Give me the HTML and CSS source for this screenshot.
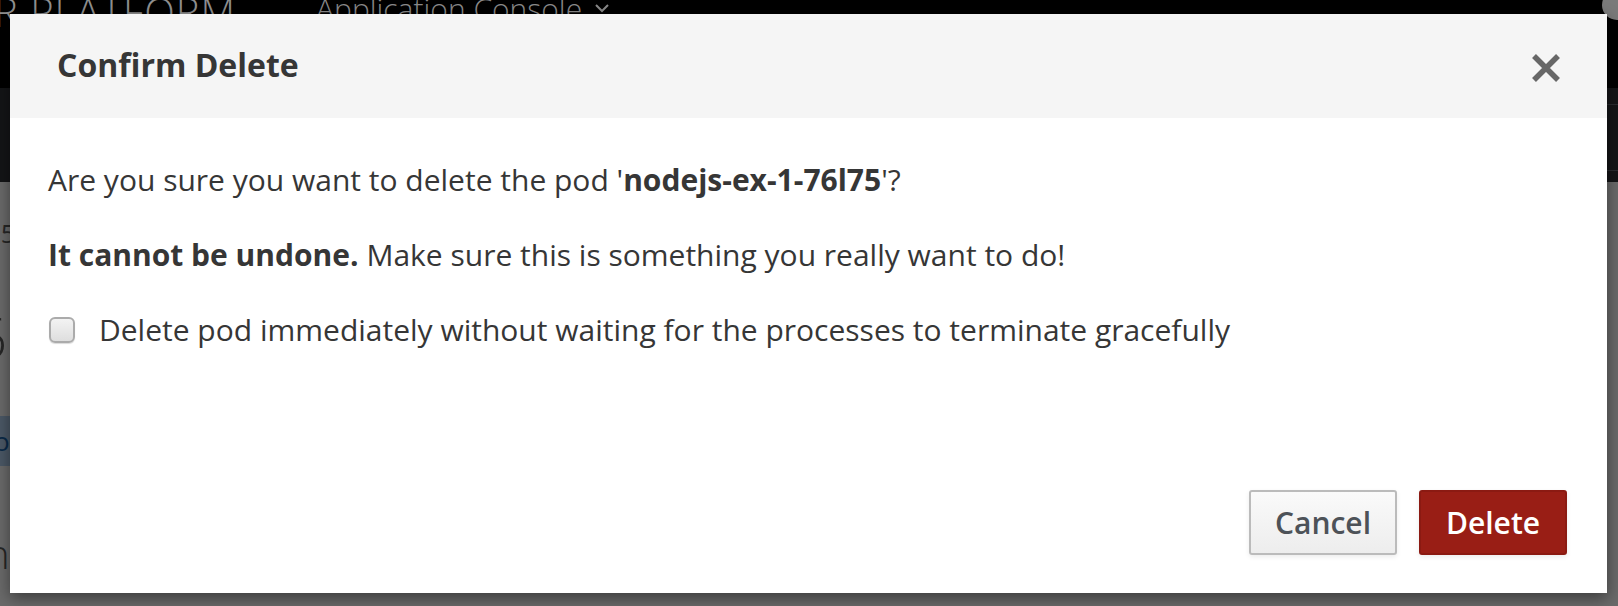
FILE: index.html
```html
<!DOCTYPE html>
<html>
<head>
<meta charset="utf-8">
<title>Confirm Delete</title>
<link rel="stylesheet" href="styles.css">
</head>
<body>
<div class="page">
  <div class="navbar">
    <span class="brand">R PLATFORM</span>
    <span class="console">Application Console</span>
    <svg class="caret" width="16" height="10" viewBox="0 0 16 10"><path d="M2 1 L8 7 L14 1" stroke="#8a8a8a" stroke-width="2" fill="none"/></svg>
    <span class="avatar"></span>
  </div>
  <div class="subnav">
    <span class="subnav-line top"></span>
    <span class="subnav-line bottom"></span>
  </div>
  <div class="content">
    <div class="peek five">15</div>
    <div class="peek six">6</div>
    <div class="peek band">po</div>
    <div class="peek en">n</div>
  </div>
</div>

<div class="modal">
  <div class="modal-header">
    <h2 class="modal-title">Confirm Delete</h2>
    <button class="close" aria-label="Close">
      <svg width="30" height="30" viewBox="0 0 30 30"><path d="M3 3 L27 27 M27 3 L3 27" stroke="#676767" stroke-width="5.5" fill="none"/></svg>
    </button>
  </div>
  <div class="modal-body">
    <p>Are you sure you want to delete the pod '<strong>nodejs-ex-1-76l75</strong>'?</p>
    <p><strong>It cannot be undone.</strong> Make sure this is something you really want to do!</p>
    <label class="check-row"><span class="checkbox"></span><span>Delete pod immediately without waiting for the processes to terminate gracefully</span></label>
  </div>
  <div class="modal-footer">
    <button class="btn btn-default">Cancel</button>
    <button class="btn btn-danger">Delete</button>
  </div>
</div>
</body>
</html>
```
FILE: styles.css
```css
html, body {
  margin: 0;
  padding: 0;
  width: 1618px;
  height: 606px;
  overflow: hidden;
  background: #6a6a6a;
  font-family: "Open Sans", "DejaVu Sans", sans-serif;
}

.page {
  width: 1618px;
  height: 606px;
  display: flex;
  flex-direction: column;
  background: #6a6a6a;
}

.navbar {
  height: 88px;
  background: #000;
  display: flex;
  align-items: flex-start;
  position: relative;
  overflow: hidden;
}

.brand {
  font-weight: 300;
  font-size: 40px;
  line-height: 1;
  color: #8f8f8f;
  margin-left: -6px;
  margin-top: -8px;
  letter-spacing: 1px;
  white-space: nowrap;
}

.console {
  font-weight: 300;
  font-size: 30px;
  line-height: 1;
  color: #8a8a8a;
  margin-left: 80px;
  margin-top: -6px;
  white-space: nowrap;
}

.caret {
  margin-left: 12px;
  margin-top: 4px;
  flex: none;
}

.avatar {
  position: absolute;
  right: -14px;
  top: -10px;
  width: 30px;
  height: 30px;
  border-radius: 50%;
  background: #7a7a7a;
}

.subnav {
  height: 94px;
  background: #141517;
  position: relative;
}

.subnav-line {
  position: absolute;
  right: 0;
  width: 12px;
  height: 1px;
  background: #2a2c30;
}
.subnav-line.top { top: 16px; }
.subnav-line.bottom { top: 82px; }

.content {
  flex: 1;
  display: flex;
  flex-direction: column;
  background: #6a6a6a;
}

.peek {
  color: #262626;
  line-height: 1;
  white-space: nowrap;
}

.five {
  font-size: 26px;
  margin-left: -14px;
  margin-top: 38px;
}

.six {
  font-size: 56px;
  font-weight: 300;
  margin-left: -25px;
  margin-top: 62px;
}

.band {
  margin-top: 52px;
  height: 50px;
  width: 10px;
  background: #4b5866;
  color: #0a2a48;
  font-size: 26px;
  line-height: 50px;
  text-indent: -22px;
  overflow: hidden;
}

.en {
  font-size: 40px;
  font-weight: 300;
  margin-left: -14px;
  margin-top: 68px;
}

/* modal */
.modal {
  position: absolute;
  left: 10px;
  top: 14px;
  width: 1597px;
  height: 579px;
  background: #fff;
  display: flex;
  flex-direction: column;
  box-shadow: 0 5px 15px rgba(0, 0, 0, 0.45);
  color: #363636;
}

.modal-header {
  height: 104px;
  box-sizing: border-box;
  background: #f5f5f5;
  display: flex;
  align-items: center;
  justify-content: space-between;
  padding: 0 46px 0 47px;
}

.modal-title {
  margin: 0;
  font-size: 32px;
  font-weight: 700;
  line-height: 40px;
  color: #363636;
  padding-bottom: 2px;
}

.close {
  border: 0;
  background: transparent;
  padding: 0;
  width: 30px;
  height: 30px;
  margin-top: 4px;
  cursor: pointer;
}

.close svg { display: block; }

.modal-body {
  padding: 37px 38px 0 38px;
  font-size: 30px;
  line-height: 50px;
  color: #363636;
}

.modal-body p {
  margin: 0 0 25px 0;
}

.modal-body strong { font-weight: 700; }

.check-row {
  display: flex;
  align-items: center;
  margin-top: 5px;
}

.checkbox {
  width: 22px;
  height: 22px;
  border: 2px solid #ababab;
  border-radius: 6px;
  background: linear-gradient(#f3f3f3, #dedede);
  box-shadow: 0 1px 1px rgba(0, 0, 0, 0.15);
  margin-right: 24px;
  margin-left: 1px;
  flex: none;
}

.modal-footer {
  margin-top: auto;
  display: flex;
  justify-content: flex-end;
  gap: 22px;
  padding: 0 40px 38px 0;
}

.btn {
  width: 148px;
  height: 65px;
  box-sizing: border-box;
  border-radius: 3px;
  font-family: "Open Sans", "DejaVu Sans", sans-serif;
  font-size: 30px;
  font-weight: 600;
  cursor: pointer;
  box-shadow: 0 2px 5px rgba(0, 0, 0, 0.08);
}

.btn-default {
  background: linear-gradient(#fafafa, #ededed);
  border: 2px solid #bbbbbb;
  color: #4d5258;
}

.btn-danger {
  background: #991e15;
  border: 2px solid #8b1a12;
  color: #fff;
}
```
